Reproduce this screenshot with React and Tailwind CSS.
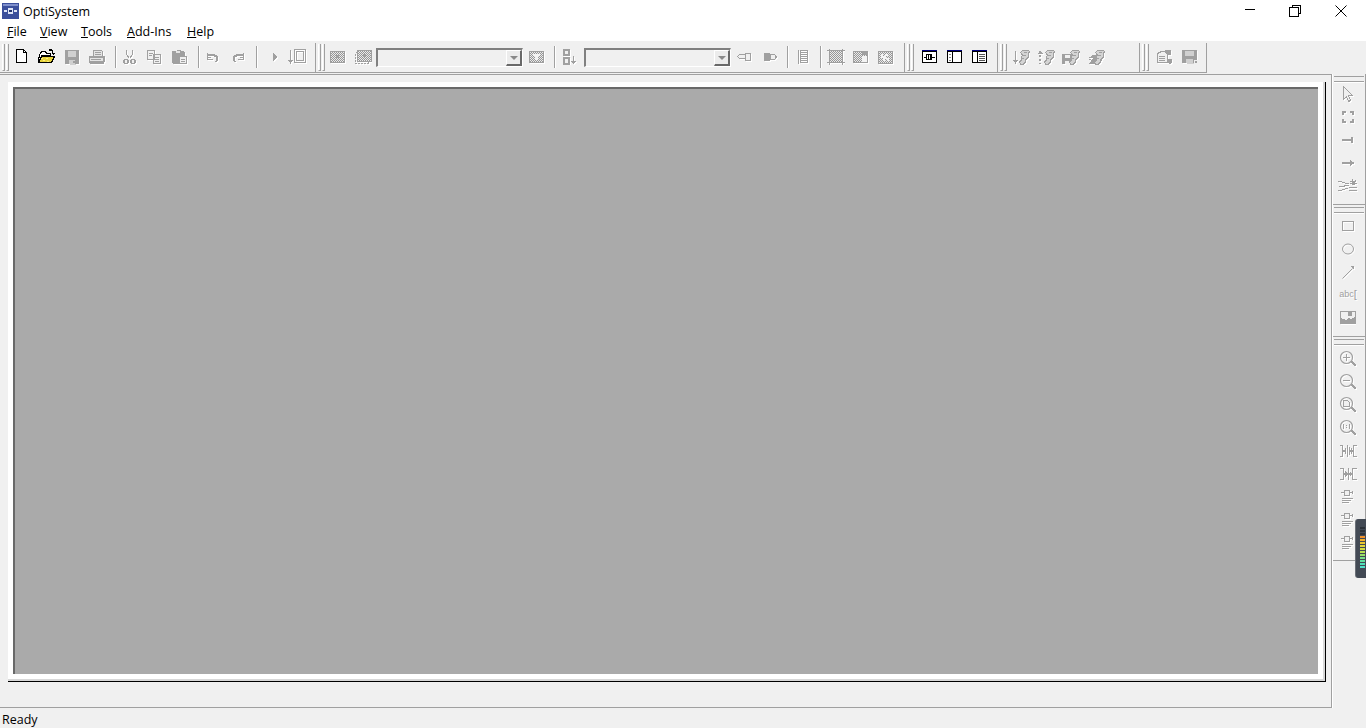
import React from "react";

const Dots = ({ c = "#969696" }) => (
  <defs>
    <pattern id="dots" width="2" height="2" patternUnits="userSpaceOnUse">
      <rect width="2" height="2" fill="#eaeaea" />
      <rect width="1" height="1" fill={c} />
      <rect x="1" y="1" width="1" height="1" fill={c} />
    </pattern>
  </defs>
);

// disabled toolbar bitmap: grey shape with a white drop copy
const Dis = ({ w = 18, h = 16, children }) => (
  <svg width={w} height={h} viewBox={`0 0 ${w} ${h}`} shapeRendering="crispEdges" className="block">
    <Dots />
    <g transform="translate(1 1)" className="text-white" fill="currentColor">{children}</g>
    <g className="text-[#a0a0a0]" fill="currentColor">{children}</g>
  </svg>
);

const Pix = ({ w = 18, h = 16, children }) => (
  <svg width={w} height={h} viewBox={`0 0 ${w} ${h}`} shapeRendering="crispEdges" className="block">
    {children}
  </svg>
);

const Line = ({ d, sw = 1 }) => <path d={d} fill="none" stroke="currentColor" strokeWidth={sw} />;

const Scroll = () => (
  <>
    <path d="M8.5 3.5l3-2.5h5l1 2-1 1v4l-3 3v2l-2 2h-3l-1-2 2-2v-3l1-2z" fill="#d4d4d4" stroke="currentColor" />
    <path d="M12 3h3v1h-3zM11 6h3v1h-3zM10 9h2v1h-2z" />
  </>
);

const icons = {
  new: (
    <Pix>
      <path d="M3.5 0.5h7l3 3v10h-10z" fill="#fff" stroke="#000" />
      <path d="M10.5 0.5v3h3" fill="none" stroke="#000" />
    </Pix>
  ),
  open: (
    <Pix>
      <path d="M2.5 3.5l2-1h3l1 2h4v2h-9l-3 7h-1z" fill="#fff" stroke="#000" />
      <path d="M4.5 7.5h12l-3 6h-13z" fill="#e6d23c" stroke="#000" />
      <path d="M3 9h2v1h-2zM5 11h2v1h-2zM8 9h2v1h-2zM9 12h2v1h-2z" fill="#fff27a" />
      <path d="M11 0h3v1h1v3h-1v-2h-3zM14 4h3l-2 2z" fill="#000" />
    </Pix>
  ),
  save: (
    <Dis>
      <path d="M2 1h14v14h-14z" />
      <path d="M5 2h8v6h-8z" fill="#d0d0d0" />
      <path d="M6 11h6v4h-6z" fill="#d0d0d0" />
      <path d="M10 12h2v2h-2z" />
    </Dis>
  ),
  print: (
    <Dis>
      <path d="M5 1h9v1h1v5h2v6h-1v2h-14v-1h-1v-7h4z" />
      <path d="M6 2h8v5h-8zM2 9h13v3h-13z" fill="#e4e4e4" />
      <path d="M7 3h6v1h-6zM7 5h6v1h-6zM3 10h10v1h-10z" />
    </Dis>
  ),
  cut: (
    <Dis>
      <Line d="M5.5 0.5v5l3 4M11.5 0.5v5l-3 4" />
      <path d="M3 10h4v1h1v3h-1v1h-4v-1h-1v-3h1zM10 10h4v1h1v3h-1v1h-4v-1h-1v-3h1z" />
      <path d="M4 11h2v3h-2zM11 11h2v3h-2z" fill="#f0f0f0" />
    </Dis>
  ),
  copy: (
    <Dis>
      <path d="M1.5 1.5h7v9h-7zM7.5 5.5h7v9h-7z" fill="#f0f0f0" stroke="currentColor" />
      <path d="M3 4h4v1h-4zM3 6h3v1h-3zM9 8h4v1h-4zM9 10h4v1h-4zM9 12h4v1h-4z" />
    </Dis>
  ),
  paste: (
    <Dis>
      <path d="M2 2h4v-1h4v1h3v1h1v4h-5v8h-7v-1h-1v-12z" />
      <path d="M5 2h4v2h-4z" fill="#e4e4e4" />
      <path d="M8.5 7.5h7v7h-7z" fill="#f0f0f0" stroke="currentColor" />
      <path d="M10 10h4v1h-4zM10 12h4v1h-4z" />
    </Dis>
  ),
  undo: (
    <Dis>
      <path d="M3 4h1v6h5v1h-6z" />
      <path d="M4 5h7v1h2v1h1v5h-1v1h-2v-1h1v-4h-2v-1h-6z" />
      <path d="M4 8h3v1h-3z" />
    </Dis>
  ),
  redo: (
    <Dis>
      <path d="M14 4h1v7h-6v-1h5z" />
      <path d="M14 5h-7v1h-2v1h-1v5h1v1h2v-1h-1v-4h2v-1h6z" />
      <path d="M11 8h3v1h-3z" />
    </Dis>
  ),
  play: (
    <Dis w={10}>
      <path d="M3 4h1v1h1v1h1v1h1v2h-1v1h-1v1h-1v1h-1z" />
    </Dis>
  ),
  importBox: (
    <Dis w={20}>
      <path d="M3 1h1v10h2l-2.5 4-2.5-4h2z" />
      <path d="M7.5 0.5h11v13h-11z" fill="none" stroke="currentColor" />
      <path d="M9.5 2.5h7v9h-7z" fill="none" stroke="currentColor" />
    </Dis>
  ),
  grid1: (
    <Dis>
      <path d="M1.5 2.5h14v11h-14z" fill="url(#dots)" stroke="currentColor" />
      <path d="M7 6h3v3h-3z" />
    </Dis>
  ),
  grid2: (
    <Dis>
      <path d="M1.5 3.5h13v11h-13z" fill="none" stroke="currentColor" strokeDasharray="2 1" />
      <path d="M3.5 1.5h14v11h-14z" fill="url(#dots)" stroke="currentColor" />
      <path d="M9 5h3v3h-3z" />
    </Dis>
  ),
  grid3: (
    <Dis>
      <path d="M1.5 2.5h14v11h-14z" fill="url(#dots)" stroke="currentColor" />
      <path d="M5 5h7v2h-2v4h-3v-4h-2z" fill="#f4f4f4" />
    </Dis>
  ),
  sort: (
    <Dis w={16}>
      <path d="M1 0h7v7h-7zM1 8h7v8h-7z" />
      <path d="M3 2h3v3h-3zM3 10h3v4h-3z" fill="#f0f0f0" />
      <path d="M11 7h1v5h2l-2.5 3-2.5-3h2z" />
    </Dis>
  ),
  linkL: (
    <Dis>
      <path d="M9.5 4.5h5v7h-5z" fill="#f0f0f0" stroke="currentColor" />
      <path d="M1.5 7.5l2-2h6v4h-6z" fill="#f0f0f0" stroke="currentColor" />
    </Dis>
  ),
  linkR: (
    <Dis>
      <path d="M3 4h6v8h-6z" />
      <path d="M9.5 5.5h4l2 2.5-2 2.5h-4z" fill="#f0f0f0" stroke="currentColor" />
    </Dis>
  ),
  list: (
    <Dis w={16}>
      <path d="M5.5 1.5h7v12h-7z" fill="none" stroke="currentColor" />
      <path d="M6 3h6v1h-6zM6 5h6v1h-6zM6 7h6v1h-6zM6 9h6v1h-6zM6 11h6v1h-6zM3 1h1v14h-1z" />
    </Dis>
  ),
  layout: (
    <Dis>
      <path d="M0 1h18v1h-18zM0 13h18v1h-18zM2 0h1v16h-1zM15 0h1v16h-1z" />
      <path d="M3 2h12v11h-12z" fill="url(#dots)" />
    </Dis>
  ),
  winSplit: (
    <Dis>
      <path d="M1.5 2.5h14v11h-14z" fill="url(#dots)" stroke="currentColor" />
      <path d="M10 3h5v3h-5z" />
      <path d="M10 7h5v6h-5z" fill="#f4f4f4" />
    </Dis>
  ),
  scribble: (
    <Dis>
      <path d="M1.5 2.5h14v12h-14z" fill="url(#dots)" stroke="currentColor" />
      <path d="M4 5h2v2h2v-2h3v2h-2v2h3v3h-2v-2h-2v2h-2v-3h-2z" fill="#f4f4f4" />
    </Dis>
  ),
  viewComp: (
    <Pix>
      <path d="M1 1h15v2h-15z" fill="#000080" />
      <path d="M1.5 2.5h14v11h-14z" fill="#fff" stroke="#000" />
      <path d="M5.5 5.5h5v5h-5z" fill="#fff" stroke="#000" />
      <path d="M3 8h2M11 8h3M7 6v4M9 6v4" stroke="#000" />
    </Pix>
  ),
  viewLeft: (
    <Pix>
      <path d="M1 1h15v2h-15z" fill="#000080" />
      <path d="M1.5 2.5h14v11h-14z" fill="#fff" stroke="#000" />
      <path d="M6 3v10" stroke="#000" />
      <path d="M3 5h2M3 8h2M3 11h2" stroke="#888" />
    </Pix>
  ),
  viewRight: (
    <Pix>
      <path d="M1 1h15v2h-15z" fill="#000080" />
      <path d="M1.5 2.5h14v11h-14z" fill="#fff" stroke="#000" />
      <path d="M6 3v10" stroke="#000" />
      <path d="M8 5h6M8 7h6M8 9h6M8 11h6" stroke="#555" />
    </Pix>
  ),
  edit1: (
    <Dis>
      <path d="M3 2h1v9h2l-2.5 4-2.5-4h2z" />
      <Scroll />
    </Dis>
  ),
  edit2: (
    <Dis>
      <path d="M2 6h2v2h-2zM2 10h2v2h-2zM2 14h2v1h-2zM3 1l3 4h-5z" />
      <Scroll />
    </Dis>
  ),
  edit3: (
    <Dis>
      <path d="M0 5h11v10h-11z" />
      <path d="M3 6h5v3h-5zM3 12h5v3h-5z" fill="#f0f0f0" />
      <Scroll />
    </Dis>
  ),
  edit4: (
    <Dis>
      <path d="M1 8h3l1-2h6l-1 3h-4l-4 6h11l3-6h-14z" />
      <path d="M2 10h2v1h-2zM5 12h2v1h-2zM8 10h2v1h-2z" />
      <Scroll />
    </Dis>
  ),
  report: (
    <Dis>
      <path d="M1.5 4.5l4-2h6v11h-10z" fill="#f0f0f0" stroke="currentColor" />
      <path d="M3 7h6v1h-6zM3 9h6v1h-6zM3 11h6v1h-6z" />
      <path d="M9 1h5l1 1v4h-4l-1-2h-1z" />
      <path d="M12 10h4v4h-1v1h-2v-1h-1z" />
    </Dis>
  ),
  saveData: (
    <Dis>
      <path d="M1 1h15v13h-15z" />
      <path d="M4 2h9v5h-9zM5 10h7v4h-7z" fill="#d0d0d0" />
      <path d="M13 11h4v4h-4z" fill="#f0f0f0" />
      <path d="M14 12h2v2h-2z" />
    </Dis>
  ),
  cursor: (
    <Dis w={16} h={18}>
      <path d="M3.5 1.5l9 9h-4l2 5-2 1-2-5-3 3z" fill="#f0f0f0" stroke="currentColor" />
    </Dis>
  ),
  select: (
    <Dis w={16}>
      <path d="M2 2h4v2h-2v2h-2zM10 2h4v4h-2v-2h-2zM2 10h2v2h2v2h-4zM12 10h2v4h-4v-2h2z" />
    </Dis>
  ),
  portL: (
    <Dis w={16}>
      <path d="M2 7h9v2h-9zM11 5h2v6h-2z" />
    </Dis>
  ),
  portR: (
    <Dis w={16}>
      <path d="M2 7h8v2h-8zM10 5h1v1h1v1h2v2h-2v1h-1v1h-1z" />
    </Dis>
  ),
  wires: (
    <Dis w={20}>
      <path d="M0 3h4v1h3v1h4v1h-4v-1h-3v-1h-4zM0 8h6v-1h5v1h-4v1h-6zM0 12h4v-1h3v-1h3v1h-3v1h-3v1h-4z" />
      <path d="M14 1h1v2h2v-1h1v2h-1v1h2v1h-2v1h-3v-1h-2v-1h2v-1h-2v-1h2z" />
      <path d="M11 9h8v1h-8zM11 12h8v1h-8z" />
    </Dis>
  ),
  rect: (
    <Dis w={16}>
      <path d="M2.5 3.5h11v9h-11z" fill="none" stroke="currentColor" />
    </Dis>
  ),
  ellipse: (
    <Dis w={16}>
      <ellipse cx="8" cy="8" rx="5.5" ry="5" fill="none" stroke="currentColor" shapeRendering="auto" />
    </Dis>
  ),
  arrow: (
    <Dis w={16}>
      <path d="M2.5 14.5l10-10" fill="none" stroke="currentColor" shapeRendering="auto" />
      <path d="M10 2h4v4z" />
    </Dis>
  ),
  picture: (
    <Dis w={16}>
      <path d="M0 1h16v13h-16z" />
      <path d="M1 2h14v5l-4 2-2-1-3 2-5-2z" fill="#f0f0f0" />
      <path d="M8 2h4v4h-4z" />
    </Dis>
  ),
  zoomIn: (
    <Mag><path d="M4 7.5h7M7.5 4v7" stroke="currentColor" /></Mag>
  ),
  zoomOut: (
    <Mag><path d="M4 7.5h7" stroke="currentColor" /></Mag>
  ),
  zoomFit: (
    <Mag><path d="M4.5 4.5h4l2 2v4h-6z" fill="#f0f0f0" stroke="currentColor" /></Mag>
  ),
  zoomOne: (
    <Mag><path d="M4 5h1v5h-1zM10 5h1v5h-1zM7 6h1v1h-1zM7 8h1v1h-1z" /></Mag>
  ),
  alignH: (
    <Dis w={20}>
      <path d="M1.5 2.5h3v11h-3M18.5 2.5h-3v11h3" fill="none" stroke="currentColor" />
      <path d="M9 2h1v12h-1zM11 4h1v8h-1zM5 7h3v2h-3zM12 7h3v2h-3z" />
      <path d="M7 5h1v6h-1zM13 5h1v6h-1z" />
    </Dis>
  ),
  alignV: (
    <Dis w={20}>
      <path d="M1.5 2.5h4v11h-4M18.5 2.5h-4v11h4" fill="none" stroke="currentColor" />
      <path d="M7 5l3 3-3 3zM13 5l-3 3 3 3z" />
      <path d="M10 2h1v12h-1zM5 7h2v2h-2zM13 7h2v2h-2z" />
    </Dis>
  ),
  row: (
    <Dis w={16}>
      <path d="M4.5 1.5h5v5h-5z" fill="#f0f0f0" stroke="currentColor" />
      <path d="M1 3h3v1h-3zM10 3h3v1h-3zM12 2h1v3h-1zM2 9h11v1h-11zM2 11h9v1h-9zM2 13h7v1h-7z" />
    </Dis>
  ),
};

function Mag({ children }) {
  return (
    <Dis w={18} h={18}>
      <circle cx="7.5" cy="7.5" r="6" fill="none" stroke="currentColor" strokeWidth="1.2" shapeRendering="auto" />
      {children}
      <path d="M12 11h2v1h1v1h1v1h1v2h-2v-1h-1v-1h-1v-1h-1z" />
    </Dis>
  );
}

const Btn = ({ icon, className = "w-[25px]" }) => (
  <div className={`${className} mt-[4px] h-[20px] shrink-0 flex items-center justify-center`}>{icons[icon]}</div>
);

const Sep = () => <div className="ml-[5px] mr-[2px] mt-[3px] w-px h-[22px] shrink-0 bg-[#a0a0a0] shadow-[1px_0_0_#fff]" />;

const Grip = () => (
  <div className="ml-[2px] mr-px flex h-full shrink-0 gap-[1.5px] py-px">
    <div className="h-full w-[2.5px] border-l border-r border-b border-l-white border-r-[#a0a0a0] border-b-[#a0a0a0]" />
    <div className="h-full w-[2.5px] border-l border-r border-b border-l-white border-r-[#a0a0a0] border-b-[#a0a0a0]" />
  </div>
);

const Group = ({ className, children }) => (
  <div className={`${className} mt-[2px] flex h-[30px] shrink-0 items-start border-r border-b border-[#a0a0a0]`}>
    <Grip />
    {children}
  </div>
);

const Combo = () => (
  <div className="mt-[5px] flex h-[19px] w-[147px] shrink-0 justify-end border-t-2 border-l-2 border-b border-r border-t-[#808080] border-l-[#808080] border-b-white border-r-white bg-[#f0f0f0]">
    <div className="flex h-[16px] w-[16px] items-center justify-center border-b-2 border-r-2 border-b-[#696969] border-r-[#696969] border-t border-l border-t-white border-l-white bg-[#ececec]">
      <div className="h-0 w-0 border-x-[4px] border-t-[4px] border-x-transparent border-t-[#8a8a8a]" />
    </div>
  </div>
);

const paletteOne = ["cursor", "select", "portL", "portR", "wires"];
const paletteTwo = ["rect", "ellipse", "arrow", "text", "picture"];
const paletteThree = ["zoomIn", "zoomOut", "zoomFit", "zoomOne", "alignH", "alignV", "row", "row", "row"];

const PaletteItem = ({ icon }) => (
  <div className="flex h-[23px] items-center justify-center pr-[2px]">
    {icon === "text" ? (
      <span className="flex items-center font-['Liberation_Sans'] text-[9px] leading-none text-[#a0a0a0] [text-shadow:1px_1px_0_#fff]">
        abc<span className="text-[11px] font-light">[</span>
      </span>
    ) : (
      icons[icon]
    )}
  </div>
);

const PaletteSection = ({ items, className, listClass }) => (
  <div className={`${className} flex flex-col border-r border-b border-[#a0a0a0]`}>
    <div className="mx-px mt-[2px] h-[6px] shrink-0 border-y border-[#a0a0a0] bg-[#f0f0f0] shadow-[0_1px_0_#fff]" />
    <div className={`${listClass} flex flex-col`}>
      {items.map((name, i) => (
        <PaletteItem key={i} icon={name} />
      ))}
    </div>
  </div>
);

const Meter = () => {
  const leds = [
    "bg-[#2c323a]", "bg-[#2c323a]", "bg-[#2c323a]",
    "bg-[#f0902a]", "bg-[#f2b02c]", "bg-[#eac832]", "bg-[#e2d63a]", "bg-[#d4dc44]",
    "bg-[#b8e050]", "bg-[#98e068]", "bg-[#78e088]", "bg-[#60e0a0]", "bg-[#50e0b8]", "bg-[#50e0c8]",
  ];
  return (
    <div className="absolute right-0 top-[519px] flex h-[59px] w-[10px] flex-col items-end gap-px rounded-l-[3px] bg-[#434a55] pt-[8px] pr-px shadow-[-1px_0_0_#6b7078]">
      {leds.map((c, i) => (
        <div key={i} className={`${c} h-[2px] w-[5px]`} />
      ))}
    </div>
  );
};

export default function App() {
  return (
    <div className="relative flex h-[728px] w-[1366px] flex-col overflow-hidden bg-[#f0f0f0] font-['Open_Sans',sans-serif] text-[12.5px] text-black">
      <div className="flex h-[22px] shrink-0 items-center bg-white">
        <svg width="18" height="16" viewBox="0 0 18 16" shapeRendering="crispEdges" className="ml-[2px]">
          <path d="M0 0h17v16h-17z" fill="#3b4f9c" />
          <path d="M1 1h15v2h-15z" fill="#7f8fcb" />
          <path d="M6 5h5v6h-5z" fill="#dfe5f7" />
          <path d="M2 7h3v2h-3zM12 7h3v2h-3z" fill="#dfe5f7" />
          <path d="M7 7h3v2h-3z" fill="#24356f" />
        </svg>
        <span className="ml-[3px] pt-[2px] leading-none">OptiSystem</span>
        <div className="ml-auto flex h-full items-center">
          <svg width="12" height="12" viewBox="0 0 12 12" className="mr-[33px]" shapeRendering="crispEdges">
            <path d="M1 4.5h10" stroke="#000" />
          </svg>
          <svg width="12" height="12" viewBox="0 0 12 12" className="mr-[34px]" shapeRendering="crispEdges">
            <path d="M3.5 2.5v-2h8v8h-2M0.5 2.5h9v9h-9z" fill="none" stroke="#000" />
          </svg>
          <svg width="12" height="12" viewBox="0 0 12 12" className="mr-[19px]">
            <path d="M0.5 0.5l11 11M11.5 0.5l-11 11" stroke="#000" />
          </svg>
        </div>
      </div>

      <div className="flex h-[19px] shrink-0 items-center bg-white pt-[2px] pl-[7px] leading-none">
        <span className="w-[33px]"><u>F</u>ile</span>
        <span className="w-[41px]"><u>V</u>iew</span>
        <span className="w-[46px]"><u>T</u>ools</span>
        <span className="w-[60px]"><u>A</u>dd-Ins</span>
        <span><u>H</u>elp</span>
      </div>

      <div className="flex h-[33px] shrink-0 items-start">
        <Group className="w-[316px]">
          <Btn icon="new" /><Btn icon="open" /><Btn icon="save" /><Btn icon="print" />
          <Sep />
          <Btn icon="cut" /><Btn icon="copy" /><Btn icon="paste" />
          <Sep />
          <Btn icon="undo" /><Btn icon="redo" />
          <Sep />
          <div className="w-[10px] shrink-0" />
          <Btn icon="play" className="w-[13px]" />
          <Btn icon="importBox" className="w-[30px]" />
        </Group>
        <Group className="w-[589px]">
          <Btn icon="grid1" /><Btn icon="grid2" />
          <div className="w-[0.5px] shrink-0" />
          <Combo />
          <div className="w-px shrink-0" />
          <Btn icon="grid3" />
          <Sep />
          <Btn icon="sort" />
          <div className="w-[2px] shrink-0" />
          <Combo />
          <div className="w-px shrink-0" />
          <Btn icon="linkL" />
          <Btn icon="linkR" />
          <Sep />
          <Btn icon="list" />
          <Sep />
          <Btn icon="layout" /><Btn icon="winSplit" /><Btn icon="scribble" />
        </Group>
        <Group className="w-[93px]">
          <div className="w-[3px] shrink-0" />
          <Btn icon="viewComp" /><Btn icon="viewLeft" /><Btn icon="viewRight" />
        </Group>
        <Group className="w-[142px]">
          <div className="w-px shrink-0" />
          <Btn icon="edit1" /><Btn icon="edit2" /><Btn icon="edit3" /><Btn icon="edit4" />
        </Group>
        <Group className="w-[67px]">
          <div className="w-[3px] shrink-0" />
          <Btn icon="report" /><Btn icon="saveData" />
        </Group>
      </div>

      <div className="flex h-[634px] shrink-0">
        <div className="w-[1332px] shrink-0 border-t border-r border-b border-[#a0a0a0] pt-[7px] pl-[8px]">
          <div className="h-[600px] w-[1318px] border-r border-b border-r-black border-b-black bg-[#d8d8d8] pr-[2px] pb-[2px]">
            <div className="h-full w-full bg-white p-[5px]">
              <div className="h-full w-full border-t-2 border-l-2 border-t-[#696969] border-l-[#696969] bg-[#aaaaaa]" />
            </div>
          </div>
        </div>
        <div className="flex w-[34px] shrink-0 flex-col border-l border-white">
          <PaletteSection items={paletteOne} className="h-[131px]" listClass="mt-0" />
          <PaletteSection items={paletteTwo} className="h-[132px]" listClass="mt-px" />
          <PaletteSection items={paletteThree} className="h-[224px]" listClass="mt-[2px]" />
        </div>
      </div>

      <div className="flex flex-1 items-center pt-[4px] pl-[2px] leading-none">Ready</div>
      <Meter />
    </div>
  );
}
